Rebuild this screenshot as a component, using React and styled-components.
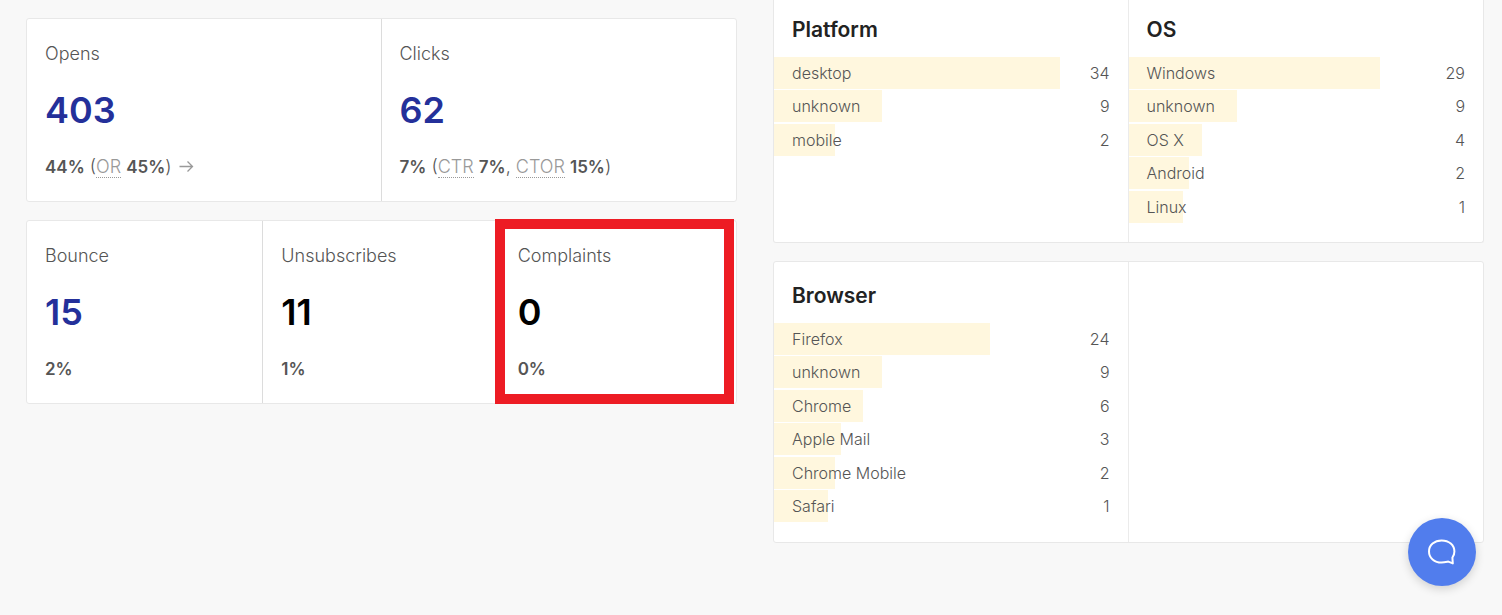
import React from 'react';
import styled, { createGlobalStyle } from 'styled-components';

const GlobalStyle = createGlobalStyle`
  *, *::before, *::after { box-sizing: border-box; }
  body {
    margin: 0;
    background: #f8f8f8;
    color: #555;
    font-family: Inter, "Liberation Sans", sans-serif;
    font-size: 18px;
    line-height: 28px;
  }
`;

const Page = styled.main`
  display: grid;
  grid-template-columns: 1fr 1fr;
  align-items: start;
  gap: 36px;
  padding: 0 18px 36px 26px;
`;

const Column = styled.div`
  display: flex;
  flex-direction: column;
  gap: 18px;
  padding-top: ${({ $inset }) => ($inset ? '18px' : '0')};
`;

const Panel = styled.section`
  display: grid;
  grid-template-columns: repeat(${({ $columns }) => $columns}, 1fr);
  background: #fff;
  border: 1px solid #e8e8e8;
  border-radius: 3px;
  ${({ $continued }) => $continued && 'border-top: 0; border-top-left-radius: 0; border-top-right-radius: 0;'}
`;

const StatCell = styled.article`
  position: relative;
  padding: 21px 18px 20px;
  &:not(:last-child) { border-right: 1px solid #dcdcdc; }
`;

const StatLabel = styled.h2`
  margin: 0;
  font-size: 18px;
  font-weight: 300;
`;

const StatValue = styled.p`
  margin: 18px 0 19px;
  color: #000;
  font-size: 36px;
  font-weight: 600;
  line-height: 48px;
`;

const StatLink = styled.a`
  color: #24309a;
  text-decoration: none;
`;

const StatDetail = styled.p`
  margin: 0;
  font-weight: 300;
  line-height: 28px;
  strong {
    font-size: 17px;
    font-weight: 600;
  }
`;

const Term = styled.abbr`
  color: #999;
  text-decoration: none;
  border-bottom: 1px dotted #999;
`;

const ArrowLink = styled.a`
  display: inline-block;
  margin-left: 7px;
  color: #999;
  svg { display: block; }
`;

const Highlight = styled.span`
  position: absolute;
  inset: -2px 2px -1px -5px;
  border: 10px solid #ed1c24;
  pointer-events: none;
`;

const BreakdownCell = styled.div`
  padding: ${({ $continued }) => ($continued ? '14px' : '18px')} 0 18px;
  &:not(:last-child) { border-right: 1px solid #ebebeb; }
`;

const BreakdownTitle = styled.h2`
  margin: 0 18px 11px;
  color: #222;
  font-size: 21px;
  font-weight: 600;
  line-height: 32px;
`;

const Rows = styled.ul`
  margin: 0;
  padding: 0;
  list-style: none;
`;

const Row = styled.li`
  display: grid;
  height: 32px;
  margin-bottom: 1px;
  font-size: 16px;
  font-weight: 300;
  line-height: 32px;
  &:nth-child(even) { margin-bottom: 2px; }
`;

const Bar = styled.span`
  grid-area: 1 / 1;
  background: #fff7de;
`;

const RowText = styled.span`
  grid-area: 1 / 1;
  display: flex;
  justify-content: space-between;
  padding: 0 18px;
`;

const ChatButton = styled.button`
  position: fixed;
  right: 26px;
  bottom: 29px;
  display: grid;
  place-items: center;
  width: 68px;
  height: 68px;
  padding: 0;
  border: 0;
  border-radius: 50%;
  background: #517ded;
  color: #fff;
  box-shadow: 0 3px 10px rgba(0, 0, 0, 0.16);
  cursor: pointer;
`;

const platforms = [
  ['desktop', 34, 81],
  ['unknown', 9, 30.6],
  ['mobile', 2, 17.2],
];

const systems = [
  ['Windows', 29, 71],
  ['unknown', 9, 30.6],
  ['OS X', 4, 20.8],
  ['Android', 2, 17.2],
  ['Linux', 1, 15.4],
];

const browsers = [
  ['Firefox', 24, 61.2],
  ['unknown', 9, 30.6],
  ['Chrome', 6, 25.2],
  ['Apple Mail', 3, 19],
  ['Chrome Mobile', 2, 17.2],
  ['Safari', 1, 15.4],
];

function Stat({ label, value, linked, highlighted, children }) {
  return (
    <StatCell>
      <StatLabel>{label}</StatLabel>
      <StatValue>{linked ? <StatLink href="#">{value}</StatLink> : value}</StatValue>
      <StatDetail>{children}</StatDetail>
      {highlighted && <Highlight aria-hidden="true" />}
    </StatCell>
  );
}

function Breakdown({ title, items, continued }) {
  return (
    <BreakdownCell $continued={continued}>
      <BreakdownTitle>{title}</BreakdownTitle>
      <Rows>
        {items.map(([name, count, share]) => (
          <Row key={name}>
            <Bar style={{ width: `${share}%` }} />
            <RowText>
              <span>{name}</span>
              <span>{count}</span>
            </RowText>
          </Row>
        ))}
      </Rows>
    </BreakdownCell>
  );
}

export default function App() {
  return (
    <>
      <GlobalStyle />
      <Page>
        <Column $inset>
          <Panel $columns={2}>
            <Stat label="Opens" value="403" linked>
              <strong>44%</strong> (<Term>OR</Term> <strong>45%</strong>)
              <ArrowLink href="#" aria-label="Opens details">
                <svg width="15" height="13" viewBox="0 0 15 13" fill="none" stroke="currentColor" strokeWidth="1.3">
                  <path d="M0.5 6.5h13M8.5 1.5l5 5-5 5" />
                </svg>
              </ArrowLink>
            </Stat>
            <Stat label="Clicks" value="62" linked>
              <strong>7%</strong> (<Term>CTR</Term> <strong>7%</strong>, <Term>CTOR</Term> <strong>15%</strong>)
            </Stat>
          </Panel>
          <Panel $columns={3}>
            <Stat label="Bounce" value="15" linked><strong>2%</strong></Stat>
            <Stat label="Unsubscribes" value="11"><strong>1%</strong></Stat>
            <Stat label="Complaints" value="0" highlighted><strong>0%</strong></Stat>
          </Panel>
        </Column>
        <Column>
          <Panel $columns={2} $continued>
            <Breakdown title="Platform" items={platforms} continued />
            <Breakdown title="OS" items={systems} continued />
          </Panel>
          <Panel $columns={2}>
            <Breakdown title="Browser" items={browsers} />
            <BreakdownCell />
          </Panel>
        </Column>
      </Page>
      <ChatButton type="button" aria-label="Open chat">
        <svg width="28" height="26" viewBox="0 0 28 26" fill="none" stroke="currentColor" strokeWidth="2" strokeLinejoin="round">
          <path d="M24.8 24.4 L24.4 18.6 C25.7 17 26.4 15 26.4 12.6 C26.4 6 21 1.4 13.6 1.4 C6.4 1.4 1 6 1 12.4 C1 19 6.4 23.6 13.6 23.6 C16.2 23.6 18.4 23 20.3 22.6 Z" />
        </svg>
      </ChatButton>
    </>
  );
}
